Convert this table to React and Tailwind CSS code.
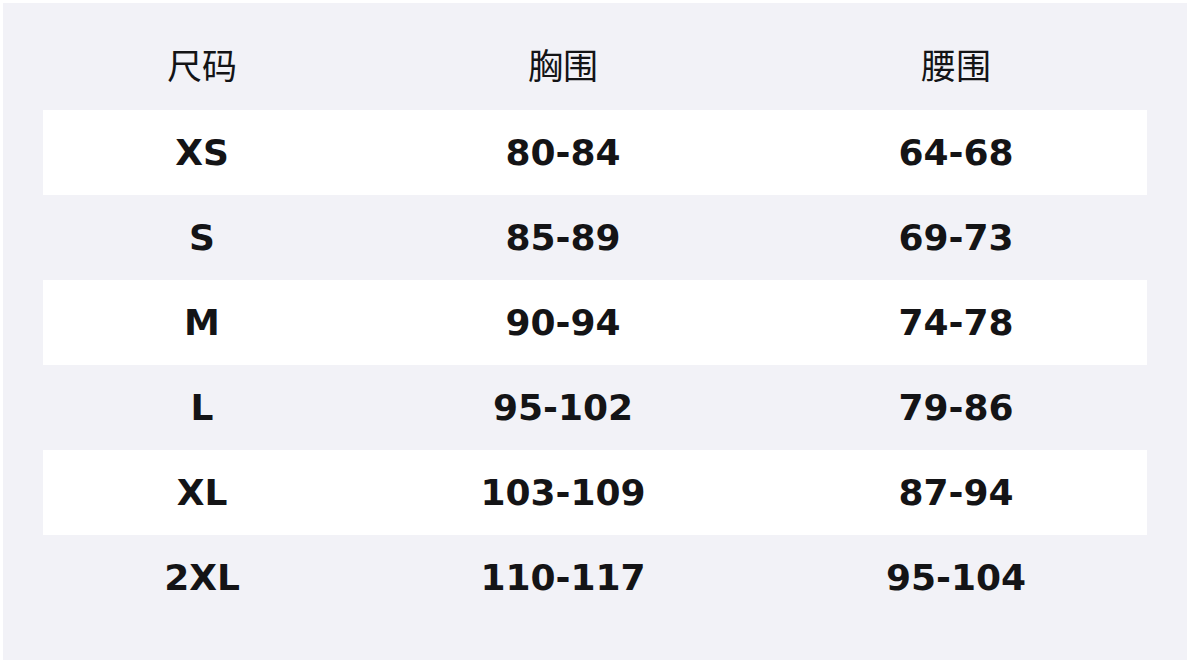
export default function App() {
  const rows = [
    ["XS", "80-84", "64-68"],
    ["S", "85-89", "69-73"],
    ["M", "90-94", "74-78"],
    ["L", "95-102", "79-86"],
    ["XL", "103-109", "87-94"],
    ["2XL", "110-117", "95-104"],
  ];
  const grid = "grid grid-cols-[318px_404px_382px]";
  return (
    <div className="w-[1190px] h-[663px] bg-white p-[3px]">
      <div className="h-full bg-[#f2f2f7] px-[40px] pt-[22px] text-[#141416]">
        <div className={`${grid} h-[85px] pb-[6px] items-center text-[35px] [font-family:'Noto_Sans_CJK_SC',sans-serif]`}>
          <div className="text-center">尺码</div>
          <div className="text-center">胸围</div>
          <div className="text-center">腰围</div>
        </div>
        {rows.map((r, i) => (
          <div
            key={r[0]}
            className={`${grid} h-[85px] items-center text-[36px] font-bold [font-family:'DejaVu_Sans',sans-serif] ${i % 2 === 0 ? "bg-white" : ""}`}
          >
            {r.map((c, j) => (
              <div key={j} className="text-center">{c}</div>
            ))}
          </div>
        ))}
      </div>
    </div>
  );
}
